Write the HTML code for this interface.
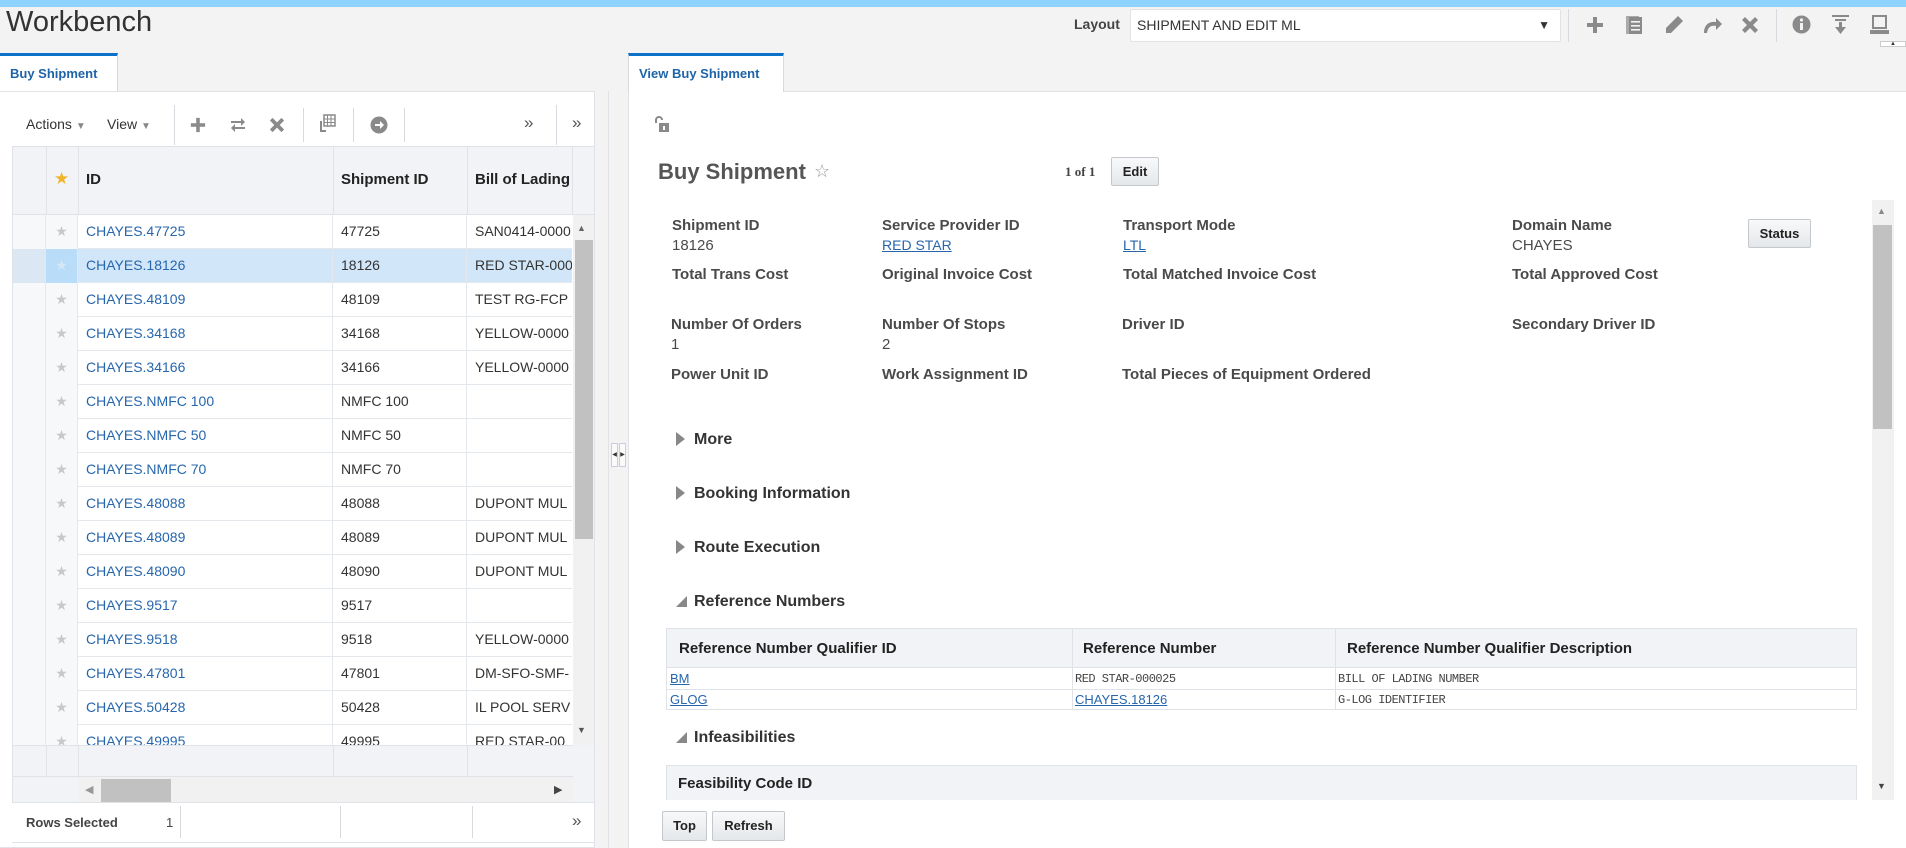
<!DOCTYPE html>
<html><head><meta charset="utf-8">
<style>
*{box-sizing:border-box;margin:0;padding:0}
body{width:1906px;height:848px;overflow:hidden;background:#f3f3f3;font-family:"Liberation Sans",Arial,sans-serif;color:#333;position:relative}
.a{position:absolute}
.lnk{color:#2666ad !important}
.u{text-decoration:underline}
.ico{position:absolute;fill:#8a8a8a}
.row{position:absolute;left:0;width:559px;height:34px;border-bottom:1px solid #e4e7eb;font-size:14px;background:#fff}
.row div{position:absolute;top:0;height:34px;line-height:33px;white-space:nowrap;overflow:hidden}
.c0{left:0;width:33px;background:#f7f8fa;border-right:1px solid #e4e7eb}
.c1{left:33px;width:32px;border-right:1px solid #e4e7eb;text-align:center;color:#c8c8c8;background:#f7f8fa}
.c2{left:65px;width:255px;padding-left:8px;border-right:1px solid #e4e7eb;color:#2666ad}
.c3{left:320px;width:134px;padding-left:8px;border-right:1px solid #e4e7eb}
.c4{left:454px;width:105px;padding-left:8px}
.lbl{position:absolute;font-size:15px;font-weight:bold;color:#4a4a4a;white-space:nowrap}
.val{position:absolute;font-size:15px;color:#4a4a4a;white-space:nowrap}
.sec{position:absolute;left:676px;font-size:16px;font-weight:bold;color:#333}
.tri{display:inline-block;width:0;height:0;border-top:7px solid transparent;border-bottom:7px solid transparent;border-left:9px solid #888;margin-right:9px;vertical-align:-2px}
.trd{display:inline-block;width:0;height:0;border-left:11px solid transparent;border-bottom:11px solid #888;margin-right:7px;vertical-align:-1px}
.btn{position:absolute;background:linear-gradient(#f8f9fa,#e4e7ea);border:1px solid #c4c8cc;border-radius:2px;font-size:13px;font-weight:bold;color:#222;text-align:center}
.sep{position:absolute;width:1px;background:#d6d9dd}
</style></head><body>
<div class="a" style="left:0;top:0;width:1906px;height:7px;background:#8dd3fe"></div>
<div class="a" style="left:6px;top:6px;font-size:29px;color:#333">Workbench</div>

<div class="a" style="left:1074px;top:16px;font-size:14px;font-weight:bold;color:#444">Layout</div>
<div class="a" style="left:1130px;top:9px;width:431px;height:33px;background:#fff;border:1px solid #e0e3e6;border-radius:2px;font-size:14px;line-height:31px;padding-left:6px;color:#333">SHIPMENT AND EDIT ML<span style="position:absolute;right:10px;font-size:12px">&#9660;</span></div>
<div class="sep" style="left:1568px;top:9px;height:33px"></div>
<div class="sep" style="left:1776px;top:9px;height:33px"></div>
<svg class="ico" style="left:1586px;top:16px" width="18" height="18" viewBox="0 0 18 18"><rect x="7" y="1" width="4" height="16"/><rect x="1" y="7" width="16" height="4"/></svg>
<svg class="ico" style="left:1626px;top:15px" width="17" height="20" viewBox="0 0 17 20"><rect x="0" y="1" width="13" height="18" fill="#aaa"/><rect x="3" y="2" width="13" height="17"/><rect x="5" y="6" width="9" height="1.6" fill="#f3f3f3"/><rect x="5" y="10" width="9" height="1.6" fill="#f3f3f3"/><rect x="5" y="14" width="9" height="1.6" fill="#f3f3f3"/></svg>
<svg class="ico" style="left:1664px;top:15px" width="20" height="20" viewBox="0 0 20 20"><path d="M14 1l5 5L7 18H2v-5z"/></svg>
<svg class="ico" style="left:1701px;top:16px" width="22" height="18" viewBox="0 0 22 18"><path d="M3 17C3 8 9 5 15 6V2l6 6-6 6V10C10 9 7 11 6 17z"/></svg>
<svg class="ico" style="left:1741px;top:16px" width="18" height="18" viewBox="0 0 18 18"><path d="M1 4l3-3 5 5 5-5 3 3-5 5 5 5-3 3-5-5-5 5-3-3 5-5z"/></svg>
<svg class="ico" style="left:1792px;top:15px" width="19" height="19" viewBox="0 0 19 19"><circle cx="9.5" cy="9.5" r="9"/><rect x="8" y="8" width="3" height="7" fill="#f3f3f3"/><circle cx="9.5" cy="5" r="1.6" fill="#f3f3f3"/></svg>
<svg class="ico" style="left:1831px;top:14px" width="19" height="21" viewBox="0 0 19 21"><rect x="1" y="1" width="17" height="2"/><rect x="4" y="5" width="11" height="2"/><rect x="8" y="8" width="3" height="7"/><path d="M4 13h11l-5.5 7z"/></svg>
<svg class="ico" style="left:1870px;top:15px" width="19" height="20" viewBox="0 0 19 20"><rect x="3" y="1" width="13" height="12" fill="none" stroke="#8a8a8a" stroke-width="2"/><rect x="0" y="15" width="19" height="4"/></svg>
<div class="a" style="left:1880px;top:41px;width:26px;height:6px;background:#fff;border:1px solid #ccc;font-size:6px;text-align:center;line-height:4px">&#9650;</div>

<div class="a" style="left:0;top:53px;width:118px;height:39px;background:#fff;border-top:3px solid #0b72c7;border-right:1px solid #d6d9dd"></div>
<div class="a" style="left:10px;top:66px;font-size:13px;font-weight:bold;color:#1d64a8">Buy Shipment</div>
<div class="a" style="left:0;top:91px;width:595px;height:757px;background:#fff;border:1px solid #dfe2e6;border-left:none"></div>
<div class="a" style="left:26px;top:116px;font-size:14px;color:#333">Actions <span style="color:#888;font-size:10px">&#9660;</span></div>
<div class="a" style="left:107px;top:116px;font-size:14px;color:#333">View <span style="color:#888;font-size:10px">&#9660;</span></div>
<div class="sep" style="left:174px;top:105px;height:40px"></div>
<svg class="ico" style="left:190px;top:117px" width="16" height="16" viewBox="0 0 18 18"><rect x="7" y="1" width="4" height="16"/><rect x="1" y="7" width="16" height="4"/></svg>
<svg class="ico" style="left:230px;top:117px" width="16" height="16" viewBox="0 0 16 16"><path d="M1 4h10V1l4 4-4 4V6H1zM15 12H5v3l-4-4 4-4v3h10z"/></svg>
<svg class="ico" style="left:269px;top:117px" width="16" height="16" viewBox="0 0 18 18"><path d="M1 4l3-3 5 5 5-5 3 3-5 5 5 5-3 3-5-5-5 5-3-3 5-5z"/></svg>
<div class="sep" style="left:303px;top:108px;height:34px"></div>
<svg class="ico" style="left:318px;top:114px" width="18" height="20" viewBox="0 0 18 20"><path d="M6 1h11v11H6z" fill="none" stroke="#8a8a8a" stroke-width="1.5"/><path d="M6 5h11M6 8.5h11M9.5 1v11M13 1v11" stroke="#8a8a8a"/><path d="M3 7v10h5" fill="none" stroke="#8a8a8a" stroke-width="2"/></svg>
<div class="sep" style="left:353px;top:108px;height:34px"></div>
<svg class="ico" style="left:370px;top:116px" width="18" height="18" viewBox="0 0 18 18"><circle cx="9" cy="9" r="8.5"/><path d="M5 8h5V5l4 4-4 4v-3H5z" fill="#fff"/></svg>
<div class="sep" style="left:404px;top:108px;height:34px"></div>
<div class="a" style="left:524px;top:113px;font-size:17px;color:#555">&raquo;</div>
<div class="sep" style="left:556px;top:105px;height:40px"></div>
<div class="a" style="left:572px;top:113px;font-size:17px;color:#555">&raquo;</div>

<div class="a" style="left:12px;top:146px;width:583px;height:657px;border:1px solid #dfe2e6;background:#f1f3f6;overflow:hidden">
  <div class="a" style="left:0;top:0;width:583px;height:68px;background:#f1f3f6;border-bottom:1px solid #dfe2e6"></div>
  <div class="a" style="left:33px;top:0;width:1px;height:68px;background:#dfe2e6"></div>
  <div class="a" style="left:65px;top:0;width:1px;height:68px;background:#dfe2e6"></div>
  <div class="a" style="left:320px;top:0;width:1px;height:68px;background:#dfe2e6"></div>
  <div class="a" style="left:454px;top:0;width:1px;height:68px;background:#dfe2e6"></div>
  <div class="a" style="left:559px;top:0;width:1px;height:68px;background:#dfe2e6"></div>
  <div class="a" style="left:41px;top:22px;color:#f0b429;font-size:17px">&#9733;</div>
  <div class="a" style="left:73px;top:24px;font-size:15px;font-weight:bold;color:#222">ID</div>
  <div class="a" style="left:328px;top:24px;font-size:15px;font-weight:bold;color:#222">Shipment ID</div>
  <div class="a" style="left:462px;top:24px;font-size:15px;font-weight:bold;color:#222;width:97px;overflow:hidden;white-space:nowrap">Bill of Lading</div>
  <div class="a" style="left:0;top:68px;width:560px;height:530px;overflow:hidden;background:#fff">
    <div class="row" style="top:0"><div class="c0"></div><div class="c1">&#9733;</div><div class="c2">CHAYES.47725</div><div class="c3">47725</div><div class="c4">SAN0414-0000</div></div>
    <div class="row" style="top:34px;background:#d1e7f9"><div class="c0" style="background:#dbe7f2"></div><div class="c1" style="background:#b9dcf8;color:#d5e6f4">&#9733;</div><div class="c2">CHAYES.18126</div><div class="c3">18126</div><div class="c4">RED STAR-000</div></div>
    <div class="row" style="top:68px"><div class="c0"></div><div class="c1">&#9733;</div><div class="c2">CHAYES.48109</div><div class="c3">48109</div><div class="c4">TEST RG-FCP</div></div>
    <div class="row" style="top:102px"><div class="c0"></div><div class="c1">&#9733;</div><div class="c2">CHAYES.34168</div><div class="c3">34168</div><div class="c4">YELLOW-0000</div></div>
    <div class="row" style="top:136px"><div class="c0"></div><div class="c1">&#9733;</div><div class="c2">CHAYES.34166</div><div class="c3">34166</div><div class="c4">YELLOW-0000</div></div>
    <div class="row" style="top:170px"><div class="c0"></div><div class="c1">&#9733;</div><div class="c2">CHAYES.NMFC 100</div><div class="c3">NMFC 100</div><div class="c4"></div></div>
    <div class="row" style="top:204px"><div class="c0"></div><div class="c1">&#9733;</div><div class="c2">CHAYES.NMFC 50</div><div class="c3">NMFC 50</div><div class="c4"></div></div>
    <div class="row" style="top:238px"><div class="c0"></div><div class="c1">&#9733;</div><div class="c2">CHAYES.NMFC 70</div><div class="c3">NMFC 70</div><div class="c4"></div></div>
    <div class="row" style="top:272px"><div class="c0"></div><div class="c1">&#9733;</div><div class="c2">CHAYES.48088</div><div class="c3">48088</div><div class="c4">DUPONT MUL</div></div>
    <div class="row" style="top:306px"><div class="c0"></div><div class="c1">&#9733;</div><div class="c2">CHAYES.48089</div><div class="c3">48089</div><div class="c4">DUPONT MUL</div></div>
    <div class="row" style="top:340px"><div class="c0"></div><div class="c1">&#9733;</div><div class="c2">CHAYES.48090</div><div class="c3">48090</div><div class="c4">DUPONT MUL</div></div>
    <div class="row" style="top:374px"><div class="c0"></div><div class="c1">&#9733;</div><div class="c2">CHAYES.9517</div><div class="c3">9517</div><div class="c4"></div></div>
    <div class="row" style="top:408px"><div class="c0"></div><div class="c1">&#9733;</div><div class="c2">CHAYES.9518</div><div class="c3">9518</div><div class="c4">YELLOW-0000</div></div>
    <div class="row" style="top:442px"><div class="c0"></div><div class="c1">&#9733;</div><div class="c2">CHAYES.47801</div><div class="c3">47801</div><div class="c4">DM-SFO-SMF-</div></div>
    <div class="row" style="top:476px"><div class="c0"></div><div class="c1">&#9733;</div><div class="c2">CHAYES.50428</div><div class="c3">50428</div><div class="c4">IL POOL SERV</div></div>
    <div class="row" style="top:510px"><div class="c0"></div><div class="c1">&#9733;</div><div class="c2">CHAYES.49995</div><div class="c3">49995</div><div class="c4">RED STAR-00</div></div>
  </div>
  <div class="a" style="left:560px;top:68px;width:22px;height:530px;background:#f1f1f1"></div>
  <div class="a" style="left:564px;top:76px;font-size:9px;color:#666">&#9650;</div>
  <div class="a" style="left:562px;top:93px;width:18px;height:299px;background:#c1c1c1"></div>
  <div class="a" style="left:564px;top:578px;font-size:9px;color:#555">&#9660;</div>
  <div class="a" style="left:0;top:598px;width:560px;height:32px;background:#f1f3f6;border-top:1px solid #dfe2e6;border-bottom:1px solid #dfe2e6"></div>
  <div class="a" style="left:33px;top:598px;width:1px;height:32px;background:#dfe2e6"></div>
  <div class="a" style="left:65px;top:598px;width:1px;height:32px;background:#dfe2e6"></div>
  <div class="a" style="left:320px;top:598px;width:1px;height:32px;background:#dfe2e6"></div>
  <div class="a" style="left:454px;top:598px;width:1px;height:32px;background:#dfe2e6"></div>
  <div class="a" style="left:65px;top:630px;width:495px;height:26px;background:#f1f1f1"></div>
  <div class="a" style="left:72px;top:636px;font-size:11px;color:#999">&#9664;</div>
  <div class="a" style="left:88px;top:632px;width:70px;height:24px;background:#c1c1c1"></div>
  <div class="a" style="left:541px;top:636px;font-size:11px;color:#444">&#9654;</div>
</div>
<div class="a" style="left:26px;top:815px;font-size:13px;font-weight:bold;color:#444">Rows Selected</div>
<div class="a" style="left:166px;top:815px;font-size:13px;color:#444">1</div>
<div class="sep" style="left:180px;top:806px;height:32px"></div>
<div class="sep" style="left:340px;top:806px;height:32px"></div>
<div class="sep" style="left:472px;top:806px;height:32px"></div>
<div class="a" style="left:572px;top:811px;font-size:17px;color:#555">&raquo;</div>
<div class="a" style="left:12px;top:842px;width:583px;height:1px;background:#dfe2e6"></div>

<div class="a" style="left:608px;top:91px;width:1px;height:757px;background:#dfe2e6"></div>
<div class="a" style="left:628px;top:91px;width:1px;height:757px;background:#dfe2e6"></div>
<div class="a" style="left:611px;top:443px;width:7px;height:24px;border:1px solid #ccd;background:#fafafa;font-size:6px;line-height:22px;text-align:center">&#9664;</div>
<div class="a" style="left:619px;top:443px;width:7px;height:24px;border:1px solid #ccd;background:#fafafa;font-size:6px;line-height:22px;text-align:center">&#9654;</div>

<div class="a" style="left:629px;top:91px;width:1277px;height:757px;background:#fff;border-top:1px solid #dfe2e6"></div>
<div class="a" style="left:628px;top:53px;width:156px;height:39px;background:#fff;border-top:3px solid #0b72c7;border-right:1px solid #d6d9dd;border-left:1px solid #d6d9dd"></div>
<div class="a" style="left:639px;top:66px;font-size:13px;font-weight:bold;color:#1d64a8">View Buy Shipment</div>
<svg class="ico" style="left:654px;top:115px" width="16" height="18" viewBox="0 0 16 18"><path d="M2 8V5a3 3 0 0 1 6 0" fill="none" stroke="#8a8a8a" stroke-width="2"/><rect x="5" y="8" width="10" height="9"/><rect x="9" y="11" width="2" height="4" fill="#fff"/></svg>
<div class="a" style="left:658px;top:159px;font-size:22px;font-weight:bold;color:#555">Buy Shipment</div>
<div class="a" style="left:814px;top:161px;font-size:18px;color:#999">&#9734;</div>
<div class="a" style="left:1065px;top:164px;font-size:13px;font-weight:bold;color:#444;font-family:'Liberation Serif',serif">1 of 1</div>
<div class="btn" style="left:1111px;top:157px;width:48px;height:29px;line-height:27px">Edit</div>

<div class="lbl" style="left:672px;top:217px">Shipment ID</div>
<div class="val" style="left:672px;top:237px">18126</div>
<div class="lbl" style="left:882px;top:217px">Service Provider ID</div>
<div class="val lnk u" style="left:882px;top:237px;font-size:14px">RED STAR</div>
<div class="lbl" style="left:1123px;top:217px">Transport Mode</div>
<div class="val lnk u" style="left:1123px;top:237px;font-size:14px">LTL</div>
<div class="lbl" style="left:1512px;top:217px">Domain Name</div>
<div class="val" style="left:1512px;top:237px">CHAYES</div>
<div class="btn" style="left:1748px;top:219px;width:63px;height:29px;line-height:27px">Status</div>

<div class="lbl" style="left:672px;top:266px">Total Trans Cost</div>
<div class="lbl" style="left:882px;top:266px">Original Invoice Cost</div>
<div class="lbl" style="left:1123px;top:266px">Total Matched Invoice Cost</div>
<div class="lbl" style="left:1512px;top:266px">Total Approved Cost</div>

<div class="lbl" style="left:671px;top:316px">Number Of Orders</div>
<div class="val" style="left:671px;top:336px">1</div>
<div class="lbl" style="left:882px;top:316px">Number Of Stops</div>
<div class="val" style="left:882px;top:336px">2</div>
<div class="lbl" style="left:1122px;top:316px">Driver ID</div>
<div class="lbl" style="left:1512px;top:316px">Secondary Driver ID</div>

<div class="lbl" style="left:671px;top:366px">Power Unit ID</div>
<div class="lbl" style="left:882px;top:366px">Work Assignment ID</div>
<div class="lbl" style="left:1122px;top:366px">Total Pieces of Equipment Ordered</div>

<div class="sec" style="top:431px"><span class="tri"></span>More</div>
<div class="sec" style="top:485px"><span class="tri"></span>Booking Information</div>
<div class="sec" style="top:539px"><span class="tri"></span>Route Execution</div>
<div class="sec" style="top:593px"><span class="trd"></span>Reference Numbers</div>

<div class="a" style="left:666px;top:628px;width:1191px;height:82px;border:1px solid #dfe2e6;background:#fff">
  <div class="a" style="left:0;top:0;width:1189px;height:39px;background:#f1f3f6;border-bottom:1px solid #dfe2e6"></div>
  <div class="a" style="left:405px;top:0;width:1px;height:80px;background:#dfe2e6"></div>
  <div class="a" style="left:668px;top:0;width:1px;height:80px;background:#dfe2e6"></div>
  <div class="a" style="left:0;top:60px;width:1189px;height:1px;background:#dfe2e6"></div>
  <div class="a" style="left:12px;top:11px;font-size:15px;font-weight:bold;color:#222">Reference Number Qualifier ID</div>
  <div class="a" style="left:416px;top:11px;font-size:15px;font-weight:bold;color:#222">Reference Number</div>
  <div class="a" style="left:680px;top:11px;font-size:15px;font-weight:bold;color:#222">Reference Number Qualifier Description</div>
  <div class="a lnk u" style="left:3px;top:42px;font-size:13px">BM</div>
  <div class="a" style="left:408px;top:43px;font-size:12px;color:#444;font-family:'Liberation Mono',monospace;letter-spacing:-0.5px">RED STAR-000025</div>
  <div class="a" style="left:671px;top:43px;font-size:12px;color:#444;font-family:'Liberation Mono',monospace;letter-spacing:-0.5px">BILL OF LADING NUMBER</div>
  <div class="a lnk u" style="left:3px;top:63px;font-size:13px">GLOG</div>
  <div class="a lnk u" style="left:408px;top:63px;font-size:13px">CHAYES.18126</div>
  <div class="a" style="left:671px;top:64px;font-size:12px;color:#444;font-family:'Liberation Mono',monospace;letter-spacing:-0.5px">G-LOG IDENTIFIER</div>
</div>

<div class="sec" style="top:729px"><span class="trd"></span>Infeasibilities</div>
<div class="a" style="left:666px;top:765px;width:1191px;height:35px;border:1px solid #dfe2e6;border-bottom:none;background:#f1f3f6"></div>
<div class="a" style="left:678px;top:775px;font-size:15px;font-weight:bold;color:#222">Feasibility Code ID</div>

<div class="a" style="left:1872px;top:200px;width:22px;height:600px;background:#f1f1f1"></div>
<div class="a" style="left:1877px;top:206px;font-size:9px;color:#888">&#9650;</div>
<div class="a" style="left:1873px;top:225px;width:19px;height:204px;background:#c1c1c1"></div>
<div class="a" style="left:1877px;top:781px;font-size:9px;color:#444">&#9660;</div>

<div class="btn" style="left:662px;top:811px;width:45px;height:30px;line-height:28px">Top</div>
<div class="btn" style="left:712px;top:811px;width:73px;height:30px;line-height:28px">Refresh</div>
</body></html>
